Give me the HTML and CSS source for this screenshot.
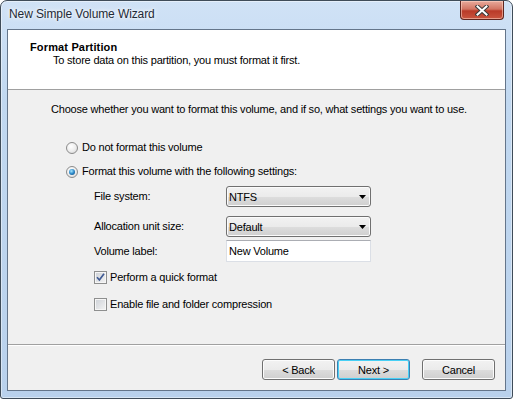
FILE: index.html
```html
<!DOCTYPE html>
<html lang="en">
<head>
  <meta charset="UTF-8" />
  <title>New Simple Volume Wizard</title>
  <link rel="stylesheet" href="styles.css">
</head>
<body>
  <div class="window">
    <div class="titlebar">
      <span class="title">New Simple Volume Wizard</span>
      <div class="close-btn">
        <svg width="14" height="11" viewBox="0 0 14 11">
          <path d="M2.5 1.5 L11.5 9.5 M11.5 1.5 L2.5 9.5" stroke="#3a3a3a" stroke-width="4" stroke-linecap="square"/>
          <path d="M2.5 1.5 L11.5 9.5 M11.5 1.5 L2.5 9.5" stroke="#ffffff" stroke-width="2" stroke-linecap="square"/>
        </svg>
      </div>
    </div>

    <div class="client">
      <div class="header">
        <div class="header-title">Format Partition</div>
        <div class="header-sub">To store data on this partition, you must format it first.</div>
      </div>

      <div class="body">
        <p class="intro">Choose whether you want to format this volume, and if so, what settings you want to use.</p>

        <div class="option opt-first">
          <span class="radio"></span>
          <span>Do not format this volume</span>
        </div>
        <div class="option opt-second">
          <span class="radio checked"></span>
          <span>Format this volume with the following settings:</span>
        </div>

        <div class="settings">
          <div class="row row-fs">
            <span class="label">File system:</span>
            <div class="combo">
              <span>NTFS</span>
              <svg class="arrow" width="7" height="4" viewBox="0 0 7 4"><polygon points="0,0 7,0 3.5,4" fill="#000"/></svg>
            </div>
          </div>
          <div class="row row-alloc">
            <span class="label">Allocation unit size:</span>
            <div class="combo">
              <span>Default</span>
              <svg class="arrow" width="7" height="4" viewBox="0 0 7 4"><polygon points="0,0 7,0 3.5,4" fill="#000"/></svg>
            </div>
          </div>
          <div class="row row-text">
            <span class="label">Volume label:</span>
            <div class="textbox">New Volume</div>
          </div>

          <div class="check-row check-quick">
            <span class="checkbox">
              <svg width="11" height="11" viewBox="0 0 11 11">
                <path d="M2 5.2 L4.4 8 L9 1.8" fill="none" stroke="#3f5a94" stroke-width="1.7"/>
              </svg>
            </span>
            <span>Perform a quick format</span>
          </div>
          <div class="check-row check-compress">
            <span class="checkbox"></span>
            <span>Enable file and folder compression</span>
          </div>
        </div>
      </div>

      <div class="footer">
        <button class="btn">&lt; Back</button>
        <button class="btn default">Next &gt;</button>
        <button class="btn cancel">Cancel</button>
      </div>
    </div>
  </div>
</body>
</html>
```

FILE: styles.css
```css
body {
  margin: 0;
  padding: 0;
  background: #ffffff;
  font-family: 'Liberation Sans', Arial, sans-serif;
  font-size: 11px;
  letter-spacing: -0.2px;
  color: #000;
}
.window {
  width: 513px;
  height: 399px;
  box-sizing: border-box;
  border: 1px solid #3f4c59;
  border-radius: 7px 7px 3px 3px;
  background: linear-gradient(to bottom, #d0e2f6 0%, #c1d8f0 25%, #b9d1ec 100%);
  box-shadow: inset 0 0 0 1px rgba(255, 255, 255, 0.45);
  display: flex;
  flex-direction: column;
  padding: 0 6px 7px 6px;
}
.titlebar {
  height: 28px;
  flex: none;
  display: flex;
  align-items: flex-start;
  justify-content: space-between;
}
.title {
  font-size: 12px;
  letter-spacing: -0.1px;
  line-height: 14px;
  color: #1e2a36;
  margin-top: 6px;
  margin-left: 2px;
  text-shadow: 0 0 6px #ffffff, 0 0 3px #ffffff;
}
.close-btn {
  width: 44px;
  height: 19px;
  margin-right: 2px;
  box-sizing: border-box;
  border: 1px solid #5e2620;
  border-top: none;
  border-radius: 0 0 4px 4px;
  background: linear-gradient(to bottom, #e8aa9c 0%, #d27563 45%, #b93a28 55%, #c9553f 100%);
  box-shadow: inset 0 0 0 1px rgba(255, 215, 200, 0.55);
  display: flex;
  align-items: center;
  justify-content: center;
}
.client {
  height: 362px;
  box-sizing: border-box;
  flex: none;
  background-color: #f0f0f0;
  border: 1px solid #64758a;
  display: flex;
  flex-direction: column;
}
.header {
  height: 60px;
  box-sizing: border-box;
  flex: none;
  background-color: #ffffff;
  border-bottom: 1px solid #a0a0a0;
  padding: 11px 0 0 22px;
}
.header-title {
  font-weight: bold;
  letter-spacing: 0.15px;
  line-height: 12px;
}
.header-sub {
  margin-top: 1px;
  margin-left: 23px;
  line-height: 12px;
}
.body {
  height: 254px;
  box-sizing: border-box;
  flex: none;
  display: flex;
  flex-direction: column;
  padding: 13px 0 0 43px;
}
.intro {
  margin: 0;
  line-height: 13px;
}
.option {
  display: flex;
  align-items: center;
  gap: 3px;
  margin-left: 15px;
  height: 13px;
  line-height: 13px;
}
.opt-first {
  margin-top: 25px;
}
.opt-second {
  margin-top: 11px;
}
.radio {
  width: 10px;
  height: 10px;
  border-radius: 50%;
  border: 1px solid #8b8b8b;
  background: radial-gradient(circle at 40% 35%, #ffffff 0%, #ececec 55%, #d0d0d0 100%);
  position: relative;
  flex: none;
  margin-right: 1px;
}
.radio.checked::after {
  content: "";
  position: absolute;
  left: 2px;
  top: 2px;
  width: 6px;
  height: 6px;
  border-radius: 50%;
  background: radial-gradient(circle at 40% 35%, #a6e6ff 0%, #2b88c8 50%, #0f3f72 100%);
}
.settings {
  display: flex;
  flex-direction: column;
  margin-left: 43px;
}
.row {
  display: flex;
  align-items: center;
  height: 21px;
}
.row-fs {
  margin-top: 8px;
}
.row-alloc {
  margin-top: 9px;
}
.row-text {
  height: 22px;
  margin-top: 3px;
}
.label {
  width: 132px;
  flex: none;
  line-height: 13px;
}
.combo {
  width: 145px;
  height: 21px;
  box-sizing: border-box;
  border: 1px solid #707070;
  border-radius: 3px;
  background: linear-gradient(to bottom, #f2f2f2 0%, #ebebeb 50%, #dddddd 51%, #cfcfcf 100%);
  box-shadow: inset 0 0 0 1px #fbfbfb;
  display: flex;
  align-items: center;
  justify-content: space-between;
  padding: 0 4px 0 2px;
}
.arrow {
  display: block;
}
.textbox {
  width: 145px;
  height: 22px;
  box-sizing: border-box;
  border: 1px solid #dbdfe6;
  border-top-color: #abadb3;
  background-color: #ffffff;
  padding: 0 0 0 2px;
  line-height: 20px;
}
.check-row {
  display: flex;
  align-items: center;
  gap: 3px;
  height: 13px;
  line-height: 13px;
}
.check-quick {
  margin-top: 9px;
}
.check-compress {
  margin-top: 14px;
}
.checkbox {
  width: 11px;
  height: 11px;
  border: 1px solid #8e8f8f;
  background: linear-gradient(135deg, #cdd1d7 0%, #f4f4f4 100%);
  box-shadow: inset 0 0 0 1px #f6f6f6;
  display: flex;
  align-items: center;
  justify-content: center;
  flex: none;
}
.footer {
  flex: 1;
  border-top: 1px solid #a0a0a0;
  box-shadow: inset 0 1px 0 #ffffff;
  display: flex;
  justify-content: flex-end;
  align-items: flex-start;
  padding: 14px 10px 0 0;
  gap: 2px;
}
.btn {
  width: 73px;
  height: 21px;
  font-family: 'Liberation Sans', Arial, sans-serif;
  font-size: 11px;
  letter-spacing: -0.2px;
  color: #000;
  border: 1px solid #707070;
  border-radius: 3px;
  background: linear-gradient(to bottom, #f2f2f2 0%, #ebebeb 50%, #dddddd 51%, #cfcfcf 100%);
  box-shadow: inset 0 0 0 1px #fcfcfc;
  padding: 0;
}
.btn.default {
  border-color: #3c7fb1;
  box-shadow: inset 0 0 0 1px #48d0f5;
}
.btn.cancel {
  margin-left: 10px;
}
```
